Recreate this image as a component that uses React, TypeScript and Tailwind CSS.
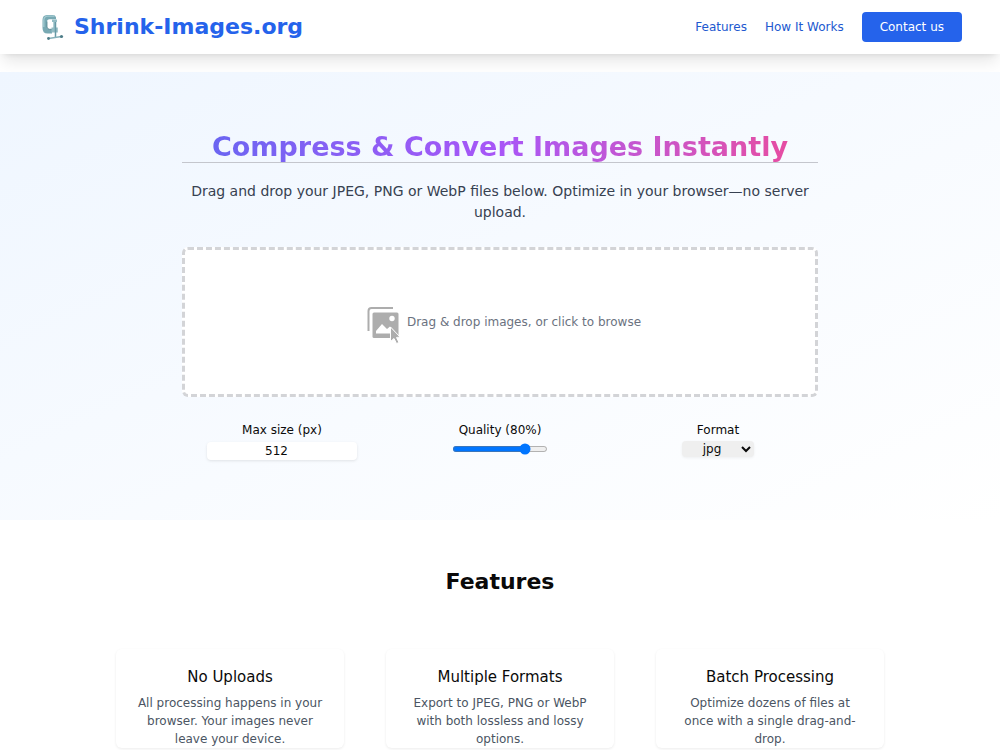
import React, { useState } from "react";

const features = [
    { title: "No Uploads", text: "All processing happens in your browser. Your images never leave your device." },
    { title: "Multiple Formats", text: "Export to JPEG, PNG or WebP with both lossless and lossy options." },
    { title: "Batch Processing", text: "Optimize dozens of files at once with a single drag-and-drop." },
];

function ClampIcon() {
    return (
        <svg viewBox="-1 0 28 28" className="h-7 w-7" aria-hidden="true">
            <path d="M17 5.5V4.2Q16.4 1.8 13 2H8Q3.500 2.200 3.500 7V15Q3.500 20.500 8.500 20.500H13V16.300H10.500Q8 16.300 8 14V9Q8 6.300 10.500 6.300H17Z" fill="#78a9b3" />
            <path d="M15.500 3.200H8.500Q4.800 3.500 4.800 7.500V14" fill="none" stroke="#a2cad1" strokeWidth="1.300" />
            <path d="M8 8.500V14Q8.200 16 10.500 16.300H13" fill="none" stroke="#4f7d89" strokeWidth="0.800" />
            <path d="M13 6.500H18V9H13ZM14.300 9H17V15H14.300ZM12.500 14.500H18.800V19.500H12.500Z" fill="#93bcc4" />
            <path d="M16.500 9V24" stroke="#6799a5" strokeWidth="1.500" />
            <path d="M9.500 25.500L22.500 23.500" stroke="#86b1ba" strokeWidth="1.700" />
            <circle cx="9.500" cy="25.500" r="1.400" fill="#4d7c87" />
            <circle cx="22.500" cy="23.500" r="1.600" fill="#4d7c87" />
        </svg>
    );
}

function ImagesIcon() {
    return (
        <svg viewBox="-7 -4 42 44" className="h-11 w-[42px]" aria-hidden="true">
            <path d="M2.500 27V7Q2.500 4 5.500 4H27" fill="none" stroke="#adadad" strokeWidth="2" />
            <rect x="6.500" y="8.500" width="26" height="25.500" rx="1.500" fill="#adadad" />
            <circle cx="26" cy="14.500" r="2.700" fill="#fff" />
            <path d="M10 29.500V27L16 20L21 25L24 22.500L29 27.500V29.500Z" fill="#fff" />
            <path d="M24.500 23L34 33L30.500 33.500L33 38.500L30.500 39.500L28 34.500L24.500 37.500Z" fill="#adadad" stroke="#fff" strokeWidth="1" />
        </svg>
    );
}

export default function App() {
    const [size, setSize] = useState("512");
    const [quality, setQuality] = useState(80);
    const [format, setFormat] = useState("jpg");

    return (
        <div className="bg-white text-xs leading-[18px] text-[#0a0a0a] font-['DejaVu_Sans',sans-serif]">
            <nav className="flex items-center justify-between bg-white px-[38px] py-3 shadow-lg">
                <a href="#" className="flex items-center gap-2 text-[22px] leading-[30px] font-bold text-[#2563eb]">
                    <ClampIcon />
                    Shrink-Images.org
                </a>
                <div className="flex items-center gap-[18px]">
                    <a href="#features" className="text-[#2158cf]">Features</a>
                    <a href="#how" className="text-[#2158cf]">How It Works</a>
                    <button type="button" className="rounded bg-[#2563eb] px-[18px] py-1.5 text-white">Contact us</button>
                </div>
            </nav>

            <section className="relative mt-[18px] bg-linear-to-br from-[#eff6ff] to-white py-[60px]">
                <div className="mx-auto max-w-[672px] px-[18px] text-center">
                    <h1 className="border-b border-[#c4c6cd] bg-linear-to-r from-[#6366f1] via-[#a855f7] to-[#ec4899] bg-clip-text text-[27px] leading-[30px] font-bold text-transparent">
                        Compress &amp; Convert Images Instantly
                    </h1>
                    <p className="mt-[18px] text-sm leading-[21px] text-[#374151]">
                        Drag and drop your JPEG, PNG or WebP files below. Optimize in your browser—no server upload.
                    </p>

                    <label className="mt-6 flex h-[150px] cursor-pointer items-center justify-center gap-1.5 rounded-md border-3 border-dashed border-[#d3d4d7] bg-white text-[#6b7280]">
                        <input type="file" multiple className="sr-only" />
                        <ImagesIcon />
                        Drag &amp; drop images, or click to browse
                    </label>

                    <div className="mt-6 grid grid-cols-3 gap-[18px]">
                        <div className="flex flex-col items-center gap-[3px]">
                            <label htmlFor="size">Max size (px)</label>
                            <input id="size" type="number" value={size} onChange={(e) => setSize(e.target.value)}
                                className="h-[18px] w-3/4 rounded bg-white pl-1 text-center shadow-[0_1px_3px_rgba(0,0,0,0.1)]" />
                        </div>
                        <div className="flex flex-col items-center gap-1">
                            <label htmlFor="quality">Quality ({quality}%)</label>
                            <input id="quality" type="range" min="0" max="100" value={quality}
                                onChange={(e) => setQuality(Number(e.target.value))} className="h-4 w-32 [zoom:0.75]" />
                        </div>
                        <div className="flex flex-col items-center gap-0.5">
                            <label htmlFor="format">Format</label>
                            <select id="format" value={format} onChange={(e) => setFormat(e.target.value)}
                                className="h-4 w-[72px] rounded bg-[#efefef] text-center leading-4 shadow-[0_1px_3px_rgba(0,0,0,0.06)]">
                                <option>jpg</option>
                                <option>png</option>
                                <option>webp</option>
                            </select>
                        </div>
                    </div>
                </div>
            </section>

            <section id="features" className="mx-auto max-w-3xl py-12 text-center">
                <h2 className="text-[22px] leading-[27px] font-bold">Features</h2>
                <div className="mt-[54px] grid grid-cols-3 gap-[42px]">
                    {features.map((f) => (
                        <div key={f.title} className="rounded-md bg-white px-[18px] pt-[18px] shadow-[0_1px_3px_rgba(0,0,0,0.08)]">
                            <h3 className="text-[15px] leading-[21px]">{f.title}</h3>
                            <p className="mt-1.5 text-[#4b5563]">{f.text}</p>
                        </div>
                    ))}
                </div>
            </section>
        </div>
    );
}
